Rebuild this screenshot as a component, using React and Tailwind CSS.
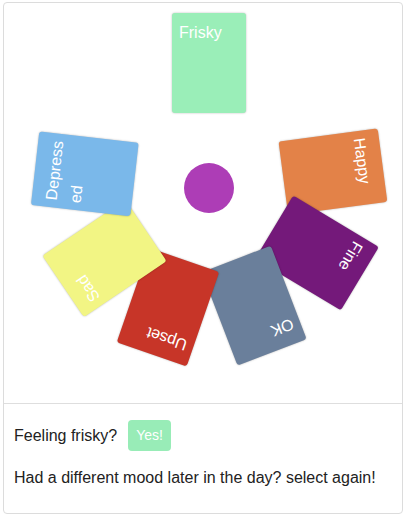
import React from "react";

const cards = [
  { label: "Frisky", bg: "bg-[#9aeeb8]", t: "[transform:rotate(0deg)_translateY(-125px)]" },
  { label: "Happy", bg: "bg-[#e38248]", t: "[transform:rotate(82.5deg)_translateY(-125px)]" },
  { label: "Fine", bg: "bg-[#74197a]", t: "[transform:rotate(121deg)_translateY(-126px)]" },
  { label: "OK", bg: "bg-[#6a7f9b]", t: "[transform:rotate(159deg)_translateY(-126px)]" },
  { label: "Upset", bg: "bg-[#c73528]", t: "[transform:rotate(199deg)_translateY(-126px)]" },
  { label: "Sad", bg: "bg-[#f2f584]", t: "[transform:rotate(236deg)_translateY(-126px)]" },
  { label: "Depressed", bg: "bg-[#7ab8ea]", t: "[transform:rotate(276.5deg)_translateY(-125px)]" },
];

export default function App() {
  return (
    <div className="w-[408px] h-[519px] bg-white pt-[2px] pl-[3px] font-['Liberation_Sans',Arial,sans-serif] text-[#222]">
      <div className="w-[400px] h-[512px] border border-[#dcdcdc] rounded-[4px] flex flex-col">
        <div className="relative h-[400px] shrink-0">
          {cards.map((c) => (
            <div
              key={c.label}
              className={`absolute left-[168px] top-[135px] w-[74px] h-[100px] rounded-[3px] ${c.bg} ${c.t} shadow-[0_0_2px_rgba(0,0,0,0.3)] pl-[7px] pr-[6px] pt-2 text-white text-[16px] leading-6 break-all`}
            >
              {c.label}
            </div>
          ))}
          <div className="absolute left-[180px] top-[160px] w-[50px] h-[50px] rounded-full bg-[#ad3db6]" />
        </div>
        <div className="border-t border-[#dedede] px-[10px] pt-4 flex flex-col">
          <div className="flex items-center h-[31px] gap-[11px] text-[16px]">
            <span>Feeling frisky?</span>
            <span className="h-[31px] px-2 rounded-[4px] bg-[#98ecb7] text-white text-[14px] flex items-center">Yes!</span>
          </div>
          <div className="mt-[15px] text-[16px] leading-6">Had a different mood later in the day? select again!</div>
        </div>
      </div>
    </div>
  );
}
